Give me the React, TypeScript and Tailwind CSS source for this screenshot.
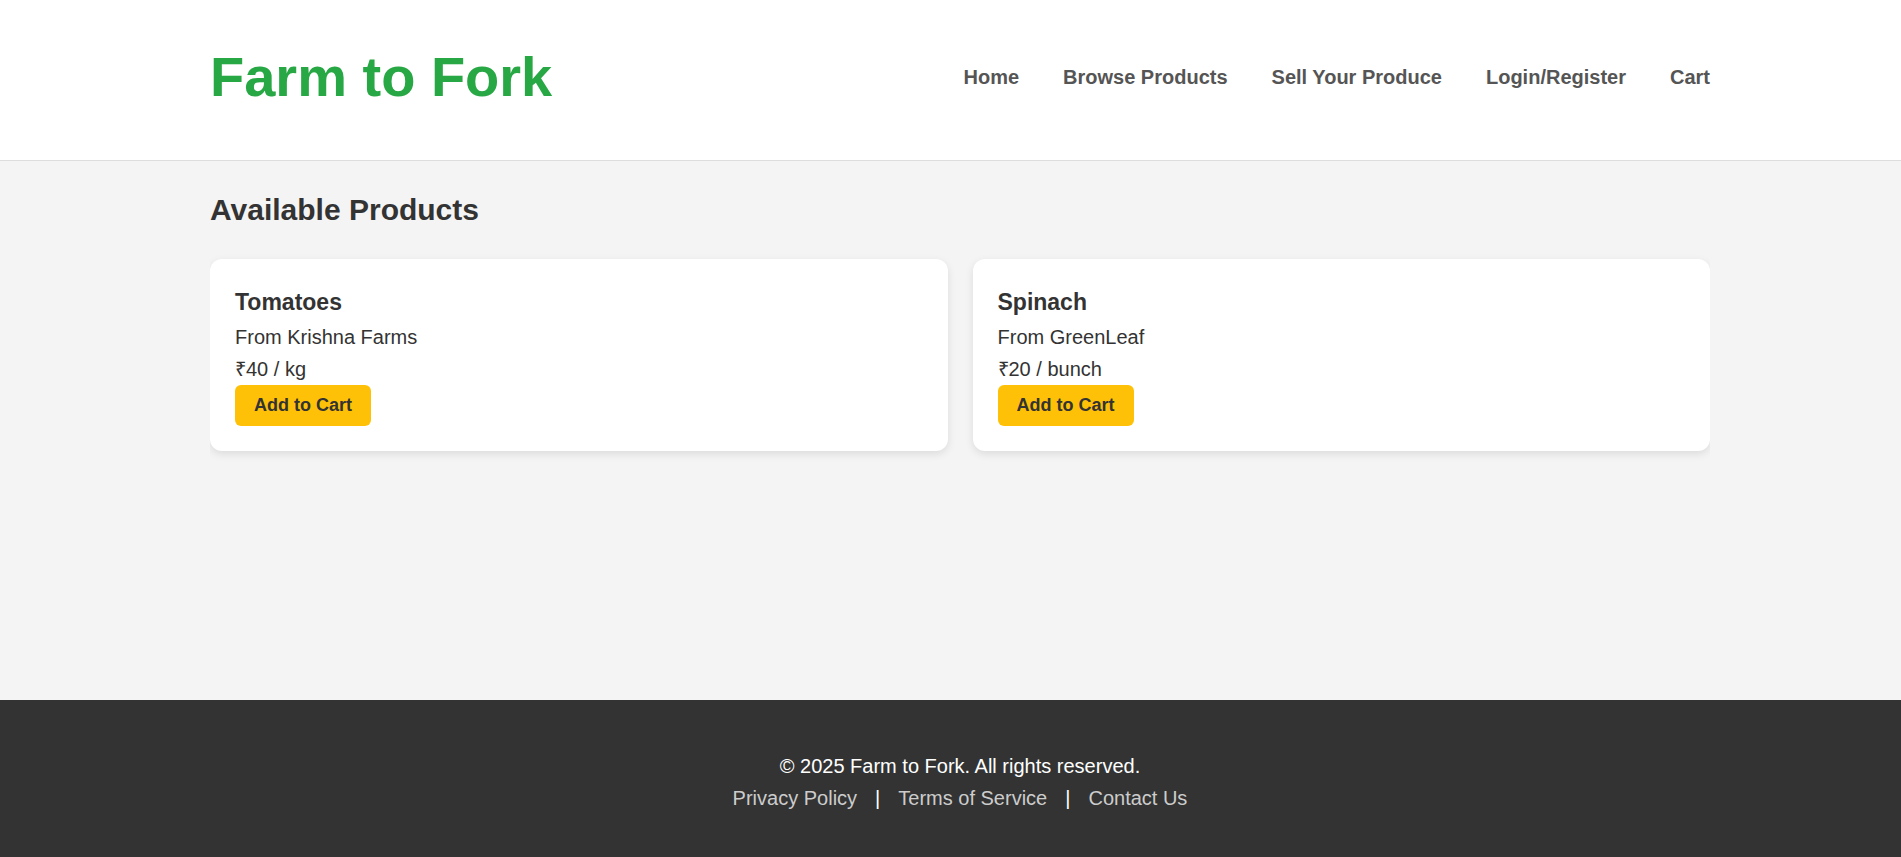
const navLinks = ['Home', 'Browse Products', 'Sell Your Produce', 'Login/Register', 'Cart'];

const products = [
  { name: 'Tomatoes', farm: 'Krishna Farms', price: '₹40 / kg' },
  { name: 'Spinach', farm: 'GreenLeaf', price: '₹20 / bunch' },
];

export default function App() {
  return (
    <div className="flex min-h-screen flex-col bg-[#f4f4f4] font-['Liberation_Sans',Arial,sans-serif] text-xl leading-8 text-[#333]">
      <header className="border-b border-[#ddd] bg-white pt-[37px] pb-[43px] pl-[19px]">
        <div className="mx-auto flex w-full max-w-[1500px] items-center justify-between">
          <h1 className="text-[56px] leading-20 font-bold text-[#28a745]">Farm to Fork</h1>
          <nav className="flex gap-11 font-bold text-[#555]">
            {navLinks.map((label) => (
              <a key={label} href="#">{label}</a>
            ))}
          </nav>
        </div>
      </header>
      <div className="grow pl-[19px]">
        <main className="mx-auto w-full max-w-[1500px] overflow-x-clip py-[25px]">
          <h2 className="text-[30px] leading-12 font-bold">Available Products</h2>
          <div className="mt-[25px] grid grid-cols-2 gap-[25px]">
            {products.map((product) => (
              <article key={product.name} className="rounded-xl bg-white p-[25px] shadow-[0_3px_8px_rgba(0,0,0,0.1)]">
                <h3 className="text-[23px] leading-[37px] font-bold">{product.name}</h3>
                <p>From {product.farm}</p>
                <p>{product.price}</p>
                <button type="button" className="block rounded-md bg-[#ffc107] px-[19px] py-2 text-lg leading-[25px] font-bold">
                  Add to Cart
                </button>
              </article>
            ))}
          </div>
        </main>
      </div>
      <footer className="bg-[#333] pt-[50px] pb-[43px] pl-[19px] text-center text-white">
        <p>© 2025 Farm to Fork. All rights reserved.</p>
        <nav className="flex justify-center gap-[18px]">
          <a href="#" className="text-[#ccc]">Privacy Policy</a>
          <span>|</span>
          <a href="#" className="text-[#ccc]">Terms of Service</a>
          <span>|</span>
          <a href="#" className="text-[#ccc]">Contact Us</a>
        </nav>
      </footer>
    </div>
  );
}
